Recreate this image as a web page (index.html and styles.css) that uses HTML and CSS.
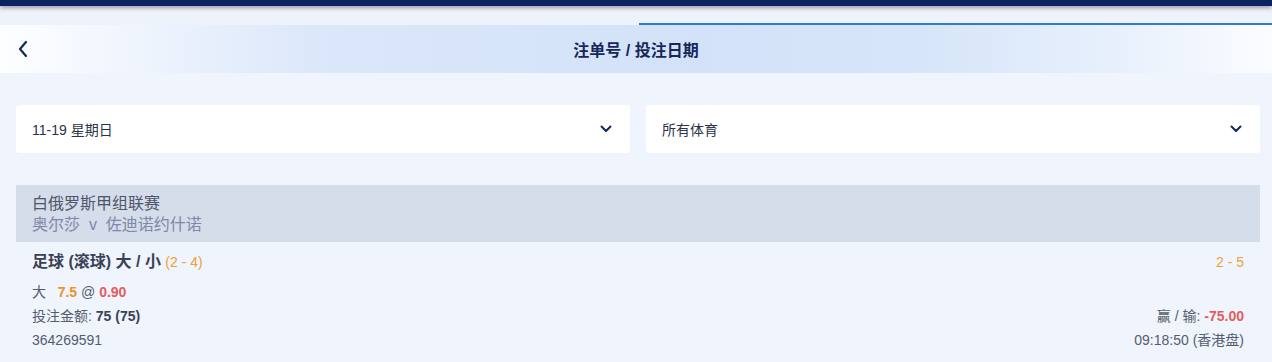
FILE: index.html
```html
<!DOCTYPE html>
<html lang="zh-CN">
<head>
    <meta charset="UTF-8">
    <title>注单号 / 投注日期</title>
    <link rel="stylesheet" href="styles.css">
</head>
<body>
    <div class="topbar"></div>
    <div class="tabs">
        <div class="tab">未结算</div>
        <div class="tab active">已结算</div>
    </div>

    <div class="page-header">
        <span class="back">
            <svg width="12" height="18" viewBox="0 0 12 18"><path d="M9 2 L3 9 L9 16" fill="none" stroke="#13285c" stroke-width="2.2" stroke-linecap="round" stroke-linejoin="round"/></svg>
        </span>
        <h1>注单号 / 投注日期</h1>
    </div>

    <div class="content">
        <div class="filters">
            <div class="select">
                <span>11-19 星期日</span>
                <svg class="caret" width="12" height="8" viewBox="0 0 12 8"><path d="M1.5 1.5 L6 6 L10.5 1.5" fill="none" stroke="#13285c" stroke-width="2" stroke-linecap="round" stroke-linejoin="round"/></svg>
            </div>
            <div class="select">
                <span>所有体育</span>
                <svg class="caret" width="12" height="8" viewBox="0 0 12 8"><path d="M1.5 1.5 L6 6 L10.5 1.5" fill="none" stroke="#13285c" stroke-width="2" stroke-linecap="round" stroke-linejoin="round"/></svg>
            </div>
        </div>

        <div class="bet-card">
            <div class="league">
                <div class="league-name">白俄罗斯甲组联赛</div>
                <div class="teams">奥尔莎 &nbsp;v&nbsp; 佐迪诺约什诺</div>
            </div>
            <div class="bet-body">
                <div class="bet-row">
                    <div class="market">足球 (滚球) 大 / 小 <span class="score">(2 - 4)</span></div>
                    <div class="score">2 - 5</div>
                </div>
                <div class="bet-row detail">
                    <div>大 &nbsp;&nbsp;<b class="orange">7.5</b> @ <b class="red">0.90</b></div>
                </div>
                <div class="bet-row detail">
                    <div>投注金额: <b>75 (75)</b></div>
                    <div>赢 / 输: <b class="red">-75.00</b></div>
                </div>
                <div class="bet-row detail">
                    <div>364269591</div>
                    <div>09:18:50 (香港盘)</div>
                </div>
            </div>
        </div>
    </div>
</body>
</html>
```

FILE: styles.css
```css
body {
    margin: 0;
    font-family: "Liberation Sans", Arial, "Noto Sans CJK SC", sans-serif;
    background-color: #eff4fd;
    color: #3c4457;
    overflow: hidden;
}
.topbar {
    height: 6px;
    background: #0b2362;
    box-shadow: 0 2px 4px rgba(0,0,0,0.35);
    position: relative;
    z-index: 2;
}
.tabs {
    display: flex;
    height: 19px;
    background: #eef2fb;
}
.tab {
    flex: 1;
    font-size: 13px;
    color: transparent;
    text-align: center;
}
.tab.active {
    border-bottom: 2px solid #2f7ccf;
    box-sizing: border-box;
    margin-left: 6px;
}
.page-header {
    height: 48px;
    display: flex;
    align-items: center;
    justify-content: center;
    position: relative;
    background: linear-gradient(90deg, #fdfeff 0%, #f3f7fe 8%, #dbe7fa 25%, #d3e2f8 55%, #d6e5f9 72%, #e8f0fc 88%, #fbfcff 100%);
}
.back {
    position: absolute;
    left: 17px;
    top: 15px;
    display: flex;
}
.page-header h1 {
    margin: 0;
    font-size: 16px;
    font-weight: bold;
    color: #17275a;
}
.content {
    padding: 32px 12px 0 16px;
}
.filters {
    display: flex;
    gap: 16px;
}
.select {
    flex: 1;
    height: 48px;
    background: #fff;
    border-radius: 3px;
    display: flex;
    align-items: center;
    justify-content: space-between;
    padding: 0 18px 0 16px;
    box-sizing: border-box;
    font-size: 14px;
    color: #2b3345;
}
.bet-card {
    margin-top: 32px;
}
.league {
    background: #d5dcea;
    padding: 8px 16px 7px;
    font-size: 16px;
    line-height: 21px;
}
.league-name {
    color: #4d566d;
}
.teams {
    color: #7c89a8;
}
.bet-body {
    padding: 8px 16px 8px 16px;
}
.bet-row {
    display: flex;
    justify-content: space-between;
    align-items: baseline;
}
.market {
    font-size: 16px;
    font-weight: bold;
    line-height: 23px;
    color: #3a4256;
}
.market .score {
    font-weight: normal;
    font-size: 14px;
}
.score {
    color: #f0a035;
    font-size: 14px;
}
.detail {
    font-size: 14px;
    line-height: 24px;
    color: #545c6e;
}
.detail:nth-child(2) {
    margin-top: 6px;
}
.detail b {
    color: #3a4256;
}
.detail b.orange {
    color: #eb9323;
}
.detail b.red {
    color: #e45d5d;
}
```
